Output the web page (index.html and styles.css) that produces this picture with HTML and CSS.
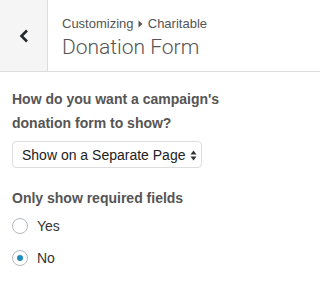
FILE: index.html
```html
<!DOCTYPE html>
<html>
<head>
<meta charset="utf-8">
<link rel="stylesheet" href="styles.css">
</head>
<body>
<div class="panel">
  <div class="header">
    <div class="back">
      <svg width="10" height="14" viewBox="0 0 10 14"><polyline points="8,1.5 2.5,7 8,12.5" fill="none" stroke="#23282d" stroke-width="2.6"/></svg>
    </div>
    <div class="titles">
      <div class="crumb">Customizing <svg class="tri" width="5" height="8" viewBox="0 0 5 8"><polygon points="0.5,0.5 4.5,4 0.5,7.5" fill="#555"/></svg> Charitable</div>
      <h3 class="title">Donation Form</h3>
    </div>
  </div>
  <div class="content">
    <div class="control">
      <div class="label">How do you want a campaign's donation form to show?</div>
      <div class="select">
        <span>Show on a Separate Page</span>
        <svg class="arrows" width="7" height="11" viewBox="0 0 7 11"><polygon points="3.5,0.5 6.5,4.5 0.5,4.5" fill="#333"/><polygon points="0.5,6.5 6.5,6.5 3.5,10.5" fill="#333"/></svg>
      </div>
    </div>
    <div class="control second">
      <div class="label">Only show required fields</div>
      <div class="radio"><span class="circle"></span><span>Yes</span></div>
      <div class="radio"><span class="circle checked"></span><span>No</span></div>
    </div>
  </div>
</div>
</body>
</html>
```
FILE: styles.css
```css
html, body {
  margin: 0;
  padding: 0;
  background: #fff;
}
body {
  font-family: "Liberation Sans", Arial, sans-serif;
  color: #555;
  overflow: hidden;
}
.header {
  display: flex;
  height: 71px;
  border-bottom: 1px solid #ddd;
  background: #fff;
}
.back {
  width: 48px;
  flex: none;
  box-sizing: border-box;
  border-right: 1px solid #ddd;
  background: #f5f5f5;
  display: flex;
  align-items: center;
  justify-content: center;
  padding-left: 1px;
}
.titles {
  padding: 14px 0 0 14px;
}
.crumb {
  font-size: 13px;
  line-height: 20px;
  color: #555;
}
.tri {
  margin: 0 1px;
  vertical-align: 0;
}
.title {
  margin: 0;
  font-family: Roboto, "Liberation Sans", sans-serif;
  font-size: 21px;
  line-height: 26px;
  font-weight: 300;
  color: #555;
}
.content {
  padding: 15px 12px 0 12px;
}
.control {
  width: 250px;
}
.label {
  font-size: 14px;
  line-height: 24px;
  font-weight: bold;
  color: #555;
}
.select {
  margin-top: 6px;
  width: 190px;
  height: 27px;
  box-sizing: border-box;
  border: 1px solid #ddd;
  border-radius: 4px;
  background: #fff;
  display: flex;
  align-items: center;
  justify-content: space-between;
  padding: 0 4px 0 9px;
  font-size: 14px;
  color: #222;
}
.arrows {
  margin-top: 1px;
}
.second {
  margin-top: 18px;
}
.radio {
  display: flex;
  align-items: center;
  height: 32px;
  font-size: 14px;
  color: #333;
}
.circle {
  width: 16px;
  height: 16px;
  box-sizing: border-box;
  border: 1px solid #b4b9be;
  border-radius: 50%;
  background: #fff;
  margin-right: 9px;
  display: flex;
  align-items: center;
  justify-content: center;
}
.circle.checked::after {
  content: "";
  width: 6px;
  height: 6px;
  border-radius: 50%;
  background: #1e8cbe;
}
```
